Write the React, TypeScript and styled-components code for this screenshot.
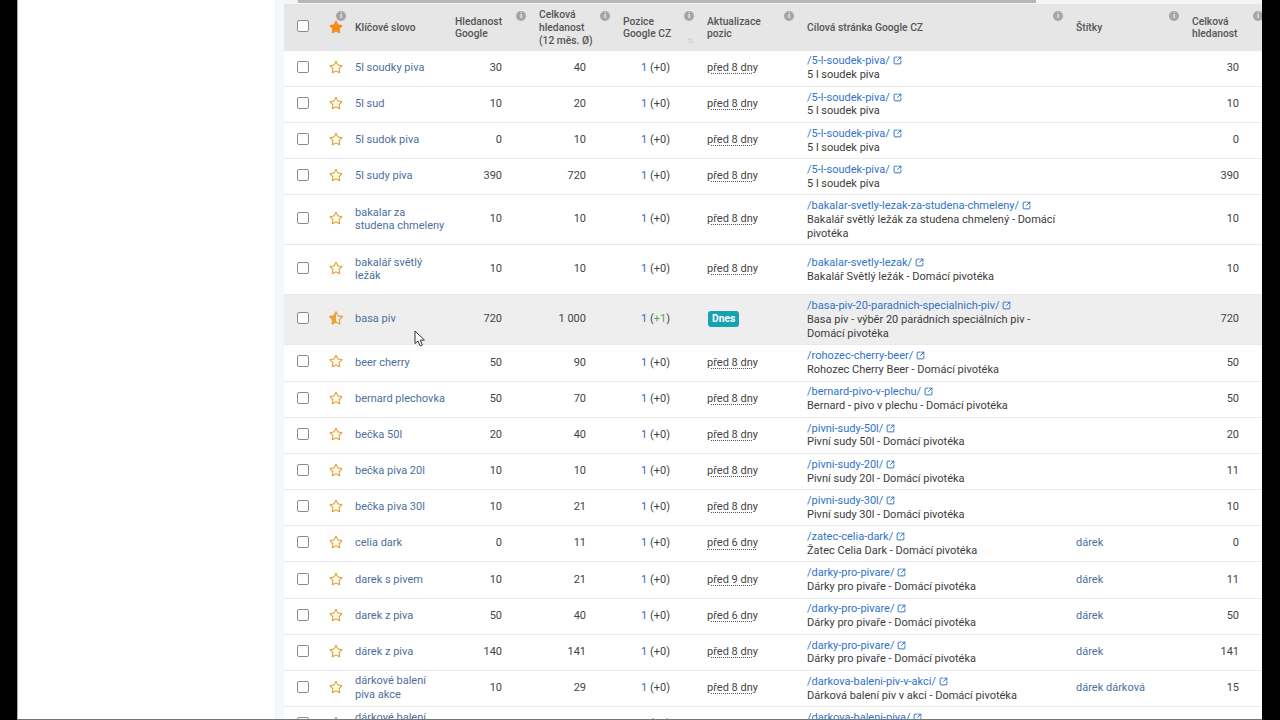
import React from "react";
import styled, { createGlobalStyle } from "styled-components";
import { FaRegStar, FaStar, FaStarHalfAlt } from "react-icons/fa";
import { SquareArrowOutUpRight } from "lucide-react";

interface KeywordRow {
  keyword: string;
  search: string;
  yearly: string;
  change?: string;
  date?: string;
  url: string;
  title: string;
  tags?: string;
  total: string;
  tall?: boolean;
  active?: boolean;
}

const rows: KeywordRow[] = [
  { keyword: "5l soudky piva", search: "30", yearly: "40", url: "/5-l-soudek-piva/", title: "5 l soudek piva", total: "30" },
  { keyword: "5l sud", search: "10", yearly: "20", url: "/5-l-soudek-piva/", title: "5 l soudek piva", total: "10" },
  { keyword: "5l sudok piva", search: "0", yearly: "10", url: "/5-l-soudek-piva/", title: "5 l soudek piva", total: "0" },
  { keyword: "5l sudy piva", search: "390", yearly: "720", url: "/5-l-soudek-piva/", title: "5 l soudek piva", total: "390" },
  { keyword: "bakalar za studena chmeleny", search: "10", yearly: "10", url: "/bakalar-svetly-lezak-za-studena-chmeleny/", title: "Bakalář světlý ležák za studena chmelený - Domácí pivotéka", total: "10", tall: true },
  { keyword: "bakalář světlý ležák", search: "10", yearly: "10", url: "/bakalar-svetly-lezak/", title: "Bakalář Světlý ležák - Domácí pivotéka", total: "10", tall: true },
  { keyword: "basa piv", search: "720", yearly: "1 000", change: "+1", url: "/basa-piv-20-paradnich-specialnich-piv/", title: "Basa piv - výběr 20 parádních speciálních piv - Domácí pivotéka", total: "720", tall: true, active: true },
  { keyword: "beer cherry", search: "50", yearly: "90", url: "/rohozec-cherry-beer/", title: "Rohozec Cherry Beer - Domácí pivotéka", total: "50" },
  { keyword: "bernard plechovka", search: "50", yearly: "70", url: "/bernard-pivo-v-plechu/", title: "Bernard - pivo v plechu - Domácí pivotéka", total: "50" },
  { keyword: "bečka 50l", search: "20", yearly: "40", url: "/pivni-sudy-50l/", title: "Pivní sudy 50l - Domácí pivotéka", total: "20" },
  { keyword: "bečka piva 20l", search: "10", yearly: "10", url: "/pivni-sudy-20l/", title: "Pivní sudy 20l - Domácí pivotéka", total: "11" },
  { keyword: "bečka piva 30l", search: "10", yearly: "21", url: "/pivni-sudy-30l/", title: "Pivní sudy 30l - Domácí pivotéka", total: "10" },
  { keyword: "celia dark", search: "0", yearly: "11", date: "před 6 dny", url: "/zatec-celia-dark/", title: "Žatec Celia Dark - Domácí pivotéka", tags: "dárek", total: "0" },
  { keyword: "darek s pivem", search: "10", yearly: "21", date: "před 9 dny", url: "/darky-pro-pivare/", title: "Dárky pro pivaře - Domácí pivotéka", tags: "dárek", total: "11" },
  { keyword: "darek z piva", search: "50", yearly: "40", date: "před 6 dny", url: "/darky-pro-pivare/", title: "Dárky pro pivaře - Domácí pivotéka", tags: "dárek", total: "50" },
  { keyword: "dárek z piva", search: "140", yearly: "141", url: "/darky-pro-pivare/", title: "Dárky pro pivaře - Domácí pivotéka", tags: "dárek", total: "141" },
  { keyword: "dárkové balení piva akce", search: "10", yearly: "29", url: "/darkova-baleni-piv-v-akci/", title: "Dárková balení piv v akci - Domácí pivotéka", tags: "dárek dárková", total: "15" },
  { keyword: "dárkové balení piva", search: "30", yearly: "30", url: "/darkova-baleni-piva/", title: "Dárková balení piva - Domácí pivotéka", tags: "dárek dárková", total: "30" },
];

const headers = [
  { label: "Hledanost Google" },
  { label: "Celková hledanost (12 měs. Ø)" },
  { label: "Pozice Google CZ", sorted: true },
  { label: "Aktualizace pozic" },
  { label: "Cílová stránka Google CZ", wide: true },
  { label: "Štítky" },
  { label: "Celková hledanost" },
];

const App: React.FC = () => (
  <>
    <GlobalStyle />
    <Page>
      <Viewport>
        <Sidebar />
        <Content>
          <ScrollTrack>
            <ScrollThumb />
          </ScrollTrack>
          <HeaderRow>
            <BoxCell>
              <Check type="checkbox" />
            </BoxCell>
            <StarHead>
              <FaStar size={14} />
              <InfoDot $right={3}>i</InfoDot>
            </StarHead>
            <HeadCell>Klíčové slovo</HeadCell>
            {headers.map((h) => (
              <HeadCell key={h.label}>
                <HeadLabel $wide={h.wide}>{h.label}</HeadLabel>
                <InfoDot $right={7}>i</InfoDot>
                {h.sorted && <SortMark>↑↓</SortMark>}
              </HeadCell>
            ))}
          </HeaderRow>
          {rows.map((r, i) => (
            <Row key={i} $tall={r.tall} $active={r.active}>
              <BoxCell>
                <Check type="checkbox" />
              </BoxCell>
              <StarCell>{r.active ? <FaStarHalfAlt size={14} /> : <FaRegStar size={14} />}</StarCell>
              <Keyword>{r.keyword}</Keyword>
              <NumberCell>{r.search}</NumberCell>
              <NumberCell>{r.yearly}</NumberCell>
              <NumberCell>
                <PositionLink>1</PositionLink> (<Change $up={!!r.change}>{r.change ?? "+0"}</Change>)
              </NumberCell>
              <DateCell>{r.active ? <Badge>Dnes</Badge> : <DateText>{r.date ?? "před 8 dny"}</DateText>}</DateCell>
              <PageCell>
                <PageLink>
                  {r.url} <SquareArrowOutUpRight size={9} strokeWidth={2.6} />
                </PageLink>
                <PageTitle>{r.title}</PageTitle>
              </PageCell>
              <TagCell>{r.tags}</TagCell>
              <NumberCell>{r.total}</NumberCell>
              {r.active && (
                <Pointer width="12" height="17" viewBox="0 0 12 17">
                  <path d="M1 1 L1 13.6 L4 11 L6.2 16 L8.4 15 L6.2 10.2 L10.4 10 Z" fill="#fff" stroke="#333" strokeWidth="1" />
                </Pointer>
              )}
            </Row>
          ))}
        </Content>
      </Viewport>
      <BottomLine />
    </Page>
  </>
);

const GlobalStyle = createGlobalStyle`
  html, body {
    margin: 0;
    padding: 0;
    background: #000;
    overflow: hidden;
  }

  body {
    font-family: Roboto, "Liberation Sans", sans-serif;
    font-size: 11px;
    color: #444;
  }
`;

const Page = styled.div`
  height: 720px;
  padding: 0 18px 0 17px;
  box-sizing: border-box;
  display: flex;
  flex-direction: column;
`;

const Viewport = styled.div`
  flex: 1;
  min-height: 0;
  display: flex;
  background: #fff;
  border-left: 1px solid #aaa;
`;

const BottomLine = styled.div`
  height: 1px;
  background: #777;
`;

const Sidebar = styled.div`
  width: 257px;
  flex: none;
  background: #fff;
  border-right: 1px solid #f0f0f0;
`;

const Content = styled.div`
  flex: 1;
  min-width: 0;
  overflow: hidden;
  padding-left: 8px;
  background: #f5f8fa;
`;

const ScrollTrack = styled.div`
  height: 4px;
  width: 1000px;
  background: #f4f4f4;
`;

const ScrollThumb = styled.div`
  height: 3px;
  width: 738px;
  margin-left: 14px;
  background: #b6b6b6;
`;

const columns = "39px 26px 100px 84px 84px 84px 100px 269px 116px 84px";

const HeaderRow = styled.div`
  display: grid;
  grid-template-columns: ${columns};
  width: 986px;
  height: 46.6px;
  background: #e6e6e6;
  font-size: 10.3px;
  font-weight: 500;
  line-height: 12.8px;
  color: #555;
`;

const Row = styled.div<{ $tall?: boolean; $active?: boolean }>`
  position: relative;
  display: grid;
  grid-template-columns: ${columns};
  width: 986px;
  height: ${({ $tall }) => ($tall ? "50px" : "36.2px")};
  box-sizing: border-box;
  background: ${({ $active }) => ($active ? "#eeeeee" : "#fff")};
  border-bottom: 1px solid #e9e9e9;
  line-height: 13.8px;
`;

const BoxCell = styled.div`
  display: flex;
  align-items: center;
  justify-content: center;
  padding: 0 1px 3px 0;
`;

const Check = styled.input`
  appearance: none;
  width: 10px;
  height: 10px;
  margin: 0;
  background: #fff;
  border: 1px solid #8c8c8c;
  border-radius: 2px;
  box-sizing: content-box;
`;

const StarCell = styled.div`
  display: flex;
  align-items: center;
  justify-content: center;
  padding-bottom: 3px;
  color: #e9a23b;
`;

const StarHead = styled(StarCell)`
  position: relative;
  padding-bottom: 1px;
  color: #f28c1e;
`;

const HeadCell = styled.div`
  position: relative;
  display: flex;
  align-items: center;
  padding: 2px 0 0 6px;
`;

const HeadLabel = styled.span<{ $wide?: boolean }>`
  display: block;
  max-width: ${({ $wide }) => ($wide ? "none" : "60px")};
`;

const InfoDot = styled.span<{ $right: number }>`
  position: absolute;
  top: 7px;
  right: ${({ $right }) => $right}px;
  width: 10px;
  height: 10px;
  border-radius: 50%;
  background: #a6a6a6;
  color: #eee;
  font-size: 8px;
  font-weight: 700;
  line-height: 10px;
  text-align: center;
`;

const SortMark = styled.span`
  position: absolute;
  top: 31px;
  right: 8px;
  font-size: 8px;
  letter-spacing: -1px;
  color: #b0b0b0;
`;

const Keyword = styled.div`
  display: flex;
  align-items: center;
  padding: 0 4px 1px 6px;
  color: #4d6f9c;
`;

const NumberCell = styled.div`
  display: flex;
  align-items: center;
  justify-content: flex-end;
  white-space: pre;
  padding: 0 31px 1px 0;
`;

const PositionLink = styled.span`
  color: #2f6db5;
`;

const Change = styled.span<{ $up: boolean }>`
  color: ${({ $up }) => ($up ? "#5f9e5f" : "inherit")};
`;

const DateCell = styled.div`
  display: flex;
  align-items: center;
  padding: 0 0 1px 6px;
`;

const DateText = styled.span`
  text-decoration: underline dotted #555;
  text-underline-offset: 2px;
`;

const Badge = styled.span`
  padding: 1px 4px;
  margin-left: 1px;
  border-radius: 3px;
  background: #16a2b5;
  color: #fff;
  font-size: 10.3px;
  font-weight: 700;
`;

const PageCell = styled.div`
  display: flex;
  flex-direction: column;
  justify-content: center;
  padding: 0 14px 0 6px;
`;

const PageLink = styled.div`
  color: #3173c9;

  svg {
    vertical-align: -1px;
  }
`;

const PageTitle = styled.div`
  color: #3c3c3c;
`;

const TagCell = styled.div`
  display: flex;
  align-items: center;
  padding: 0 0 1px 6px;
  color: #4d6f9c;
`;

const Pointer = styled.svg`
  position: absolute;
  z-index: 2;
  left: 130px;
  top: 35px;
`;

export default App;
